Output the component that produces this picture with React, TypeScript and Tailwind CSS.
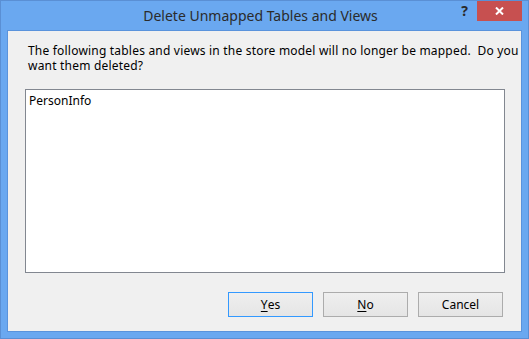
const font = { fontFamily: '"Noto Sans", "Open Sans", Arial, sans-serif' };

const buttons = [
  { key: 'yes', label: 'Yes', mnemonic: 'Y', rest: 'es', isDefault: true },
  { key: 'no', label: 'No', mnemonic: 'N', rest: 'o', isDefault: false },
  { key: 'cancel', label: 'Cancel', mnemonic: '', rest: 'Cancel', isDefault: false },
];

function CloseGlyph() {
  return (
    <svg width="9" height="8" viewBox="0 0 9 8" className="block">
      <path d="M1 0.5 L8 7.5 M8 0.5 L1 7.5" stroke="#ffffff" strokeWidth="2" />
    </svg>
  );
}

export default function App() {
  return (
    <div
      className="flex h-[339px] w-[529px] flex-col border border-[#5a8fd4] bg-[#6aa8f0] text-[#000]"
      style={font}
    >
      {/* title bar */}
      <div className="relative flex h-[29px] shrink-0 items-center justify-center">
        <span className="pr-[8px] text-[14px] leading-none text-[#2b2b2b]">Delete Unmapped Tables and Views</span>
        <span className="absolute right-[60px] top-[3px] text-[14px] font-bold leading-none text-[#2a2a2a]">?</span>
        <div className="absolute right-[6px] top-0 flex h-[20px] w-[45px] items-center justify-center bg-[#c75050]">
          <CloseGlyph />
        </div>
      </div>

      {/* client area */}
      <div className="mx-[6px] mb-[6px] flex flex-1 flex-col border border-[#5a93dc] bg-[#f0f0f0]">
        <p className="whitespace-pre pl-[20px] pt-[12px] text-[12px] leading-[15px] tracking-[0.2px]">
          {'The following tables and views in the store model will no longer be mapped.  Do you'}
          <br />
          {'want them deleted?'}
        </p>

        <div className="ml-[17px] mr-[16px] mt-[16px] h-[184px] border border-[#828790] bg-white px-[3px] pt-[3px]">
          <div className="text-[12px] leading-[15px]">PersonInfo</div>
        </div>

        <div className="mt-[19px] flex justify-end gap-[10px] pr-[18px]">
          {buttons.map((b) => (
            <div
              key={b.key}
              className={`flex h-[25px] w-[85px] items-center justify-center border bg-gradient-to-b from-[#efefef] to-[#e5e5e5] text-[12px] leading-none ${
                b.isDefault ? 'border-[#3399ff]' : 'border-[#acacac]'
              }`}
            >
              {b.mnemonic && <span className="underline underline-offset-2">{b.mnemonic}</span>}
              <span>{b.rest}</span>
            </div>
          ))}
        </div>
      </div>
    </div>
  );
}
